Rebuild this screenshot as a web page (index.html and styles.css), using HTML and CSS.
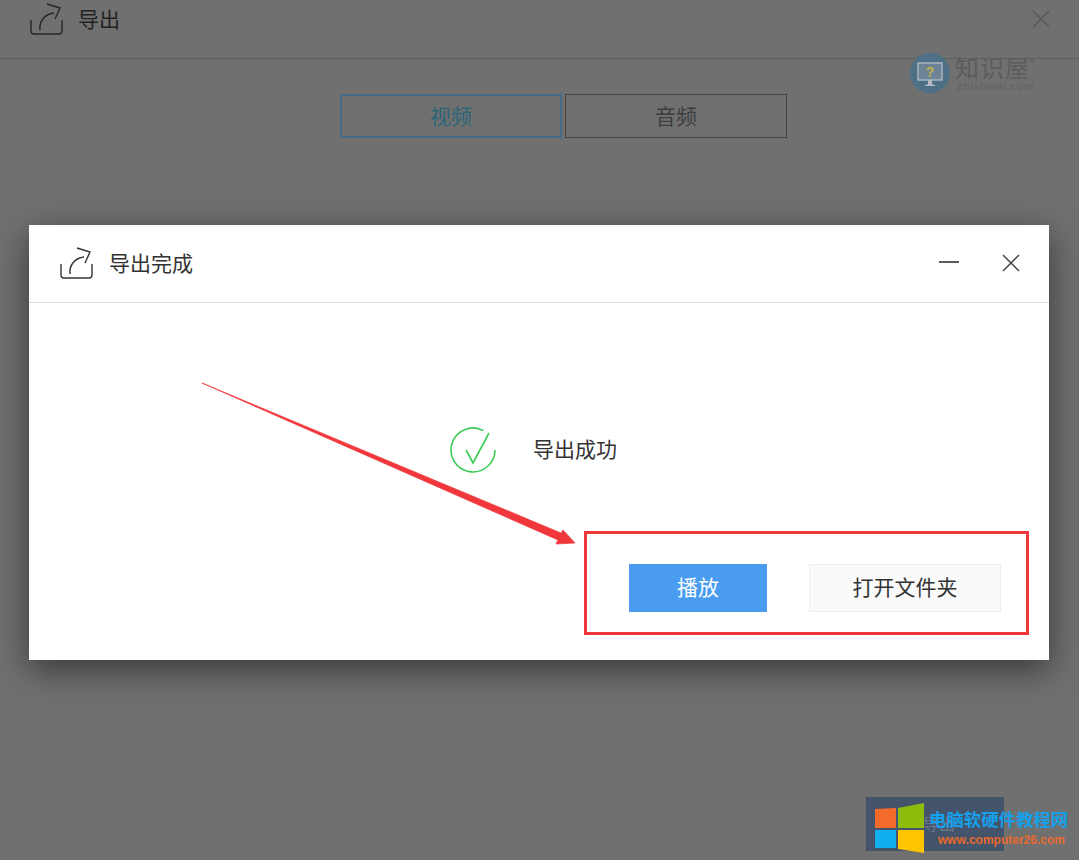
FILE: index.html
```html
<!DOCTYPE html>
<html lang="zh-CN">
<head>
  <meta charset="UTF-8" />
  <meta name="viewport" content="width=device-width, initial-scale=1" />
  <title>导出完成</title>
  <link rel="stylesheet" href="styles.css">
</head>
<body>

  <svg class="defs" width="0" height="0">
    <symbol id="exportIcon" viewBox="0 0 34 34">
      <path d="M1 17V28Q1 31 4 31H29Q32 31 32 28V17" />
      <path d="M10 27C9 18 15 11 24 10" />
      <path d="M17 1L30 5L25 16" />
    </symbol>
  </svg>

  <!-- window behind the dialog -->
  <header class="page-head">
    <svg class="export-icon"><use href="#exportIcon" /></svg>
    <h1>导出</h1>
    <svg class="close-icon page-close" viewBox="0 0 18 18"><path d="M1 1L17 17M17 1L1 17" /></svg>
  </header>
  <div class="tabs">
    <div class="tab active">视频</div>
    <div class="tab">音频</div>
  </div>

  <!-- dialog -->
  <section class="dialog">
    <div class="dialog-head">
      <svg class="export-icon"><use href="#exportIcon" /></svg>
      <h2>导出完成</h2>
      <svg class="min-icon" viewBox="0 0 20 4"><path d="M0 2H20" /></svg>
      <svg class="close-icon" viewBox="0 0 18 18"><path d="M1 1L17 17M17 1L1 17" /></svg>
    </div>
    <div class="status">
      <svg class="check-icon" viewBox="0 0 48 48">
        <path d="M46 24A22 22 0 1 1 34.5 4.6" />
        <path d="M17 24L24 37L40 7" />
      </svg>
      <span>导出成功</span>
    </div>
    <div class="actions">
      <button class="btn btn-primary">播放</button>
      <button class="btn btn-plain">打开文件夹</button>
    </div>
  </section>

  <!-- red annotation drawn over the screenshot -->
  <svg class="annotation" viewBox="0 0 1079 860">
    <polygon points="202,383 561,533 563,530 575,543 556,544 558,540" />
    <rect x="585.5" y="532.5" width="442" height="101" />
  </svg>

  <!-- watermarks -->
  <div class="mark-top">
    <svg class="mark-badge" viewBox="0 0 40 40">
      <circle cx="20" cy="20" r="20" />
      <rect class="screen" x="8" y="10" width="24" height="17" />
      <path class="stand" d="M18 27H22V31L26 33H14L18 31Z" />
      <text class="quest" x="20" y="24" text-anchor="middle">?</text>
    </svg>
    <div class="mark-text">
      <div class="mark-name">知识屋<sup>®</sup></div>
      <div class="mark-url">zhishiwu.com</div>
    </div>
  </div>

  <div class="mark-bottom">
    <span class="ghost">导出</span>
    <svg class="win-logo" viewBox="0 0 50 51">
      <polygon fill="#f26b2b" points="0,6 21,5 21,25 0,25" />
      <polygon fill="#8fbc0a" points="23,5 49,0 49,25 23,25" />
      <polygon fill="#10b0ee" points="0,27 21,27 21,45 0,45" />
      <polygon fill="#fdc400" points="23,27 49,27 49,50 23,46" />
    </svg>
    <div class="mark-bottom-text">
      <div class="site-name">电脑软硬件教程网</div>
      <div class="site-url">www.computer26.com</div>
    </div>
  </div>

</body>
</html>
```

FILE: styles.css
```css
body {
  margin: 0;
  height: 860px;
  overflow: hidden;
  position: relative;
  background: #707070;
  color: #222;
  font-family: "Noto Sans CJK SC", "Liberation Sans", sans-serif;
}
h1, h2 {
  margin: 0;
  font-size: 21px;
  font-weight: 400;
}
.defs {
  position: absolute;
}
.export-icon {
  width: 34px;
  height: 34px;
  flex: none;
  fill: none;
  stroke: #333;
  stroke-width: 1.4;
}

/* window behind */
.page-head {
  display: flex;
  align-items: center;
  gap: 15px;
  height: 59px;
  padding: 0 29px 21px 30px;
  box-sizing: border-box;
  border-bottom: 1px solid #5e5e5e;
}
.page-head .export-icon {
  stroke: #262626;
  margin-top: 2px;
}
.page-head h1 {
  color: #222;
  margin-top: -2px;
  margin-left: -1px;
}
.close-icon {
  width: 18px;
  height: 18px;
  flex: none;
  fill: none;
  stroke: #444;
  stroke-width: 1.5;
}
.page-close {
  margin-left: auto;
  stroke: #5a5a5a;
}
.tabs {
  display: flex;
  gap: 3px;
  margin-top: 35px;
  padding-left: 340px;
}
.tab {
  width: 222px;
  height: 44px;
  box-sizing: border-box;
  border: 1px solid #444;
  padding-bottom: 2px;
  display: flex;
  align-items: center;
  justify-content: center;
  font-size: 21px;
  color: #3d3d3d;
}
.tab.active {
  border: 2px solid #456b8b;
  color: #2c6578;
}

/* dialog */
.dialog {
  position: absolute;
  left: 29px;
  top: 225px;
  width: 1020px;
  height: 435px;
  background: #fff;
  box-shadow: 0 10px 32px rgba(0, 0, 0, 0.5);
}
.dialog-head {
  display: flex;
  align-items: center;
  height: 78px;
  box-sizing: border-box;
  padding: 0 29px 0 31px;
  border-bottom: 1px solid #ddd;
}
.dialog-head h2 {
  margin-left: 15px;
  margin-top: -4px;
  color: #333;
}
.min-icon {
  width: 20px;
  height: 4px;
  margin-left: auto;
  margin-right: 43px;
  margin-top: -3px;
  fill: none;
  stroke: #333;
  stroke-width: 1.6;
}
.dialog-head .close-icon {
  margin-top: -1px;
}
.status {
  display: flex;
  align-items: center;
  gap: 36px;
  margin-top: 123px;
  padding-left: 420px;
  font-size: 21px;
  color: #333;
}
.status span {
  margin-top: -4px;
}
.check-icon {
  width: 48px;
  height: 48px;
  fill: none;
  stroke: #3ccb55;
  stroke-width: 1.6;
}
.actions {
  display: flex;
  justify-content: flex-end;
  gap: 42px;
  margin-top: 90px;
  padding-right: 48px;
}
.btn {
  height: 48px;
  padding: 0 0 4px;
  font-family: inherit;
  font-size: 21px;
  border: 1px solid transparent;
  border-radius: 0;
}
.btn-primary {
  width: 138px;
  background: #4a9cf0;
  color: #fff;
}
.btn-plain {
  width: 192px;
  background: #fafafa;
  border-color: #f0f0f0;
  color: #333;
}

/* annotation */
.annotation {
  position: absolute;
  left: 0;
  top: 0;
  width: 1079px;
  height: 860px;
  pointer-events: none;
}
.annotation polygon {
  fill: #f0383c;
  stroke: #f0383c;
  stroke-width: 0.7;
}
.annotation rect {
  fill: none;
  stroke: #f0383c;
  stroke-width: 3;
}

/* watermarks */
.mark-top {
  position: absolute;
  left: 910px;
  top: 53px;
  display: flex;
  gap: 5px;
}
.mark-badge {
  width: 40px;
  height: 40px;
}
.mark-badge circle {
  fill: #4d7087;
}
.mark-badge .screen {
  fill: #6c8496;
  stroke: #a8b4bc;
  stroke-width: 1.5;
}
.mark-badge .stand {
  fill: #b4bcc2;
}
.mark-badge .quest {
  font-family: "Liberation Sans", sans-serif;
  font-size: 14px;
  font-weight: 700;
  fill: #c4b24c;
}
.mark-name {
  font-size: 24px;
  line-height: 27px;
  letter-spacing: 1px;
  color: #5c5c5c;
  white-space: nowrap;
}
.mark-name sup {
  font-size: 11px;
  line-height: 0;
  letter-spacing: 0;
  vertical-align: 10px;
}
.mark-url {
  margin-left: 2px;
  font-size: 11px;
  line-height: 12px;
  letter-spacing: 0.4px;
  font-weight: 700;
  color: #656565;
  font-family: "Liberation Sans", sans-serif;
}
.mark-bottom {
  position: absolute;
  left: 866px;
  top: 797px;
  width: 138px;
  height: 54px;
  background: #44546a;
}
.win-logo {
  position: absolute;
  left: 9px;
  top: 6px;
  width: 50px;
  height: 51px;
}
.mark-bottom-text {
  position: absolute;
  left: 63px;
  top: 10px;
  width: 150px;
  white-space: nowrap;
}
.site-name {
  font-size: 17.4px;
  line-height: 24px;
  font-weight: 700;
  color: #14a0ea;
}
.site-url {
  margin-left: 9px;
  font-family: "Liberation Sans", sans-serif;
  font-size: 12px;
  line-height: 18px;
  font-weight: 700;
  color: #e8692c;
}
.ghost {
  position: absolute;
  left: 57px;
  top: 14px;
  font-size: 16px;
  color: #6b7788;
}
```
